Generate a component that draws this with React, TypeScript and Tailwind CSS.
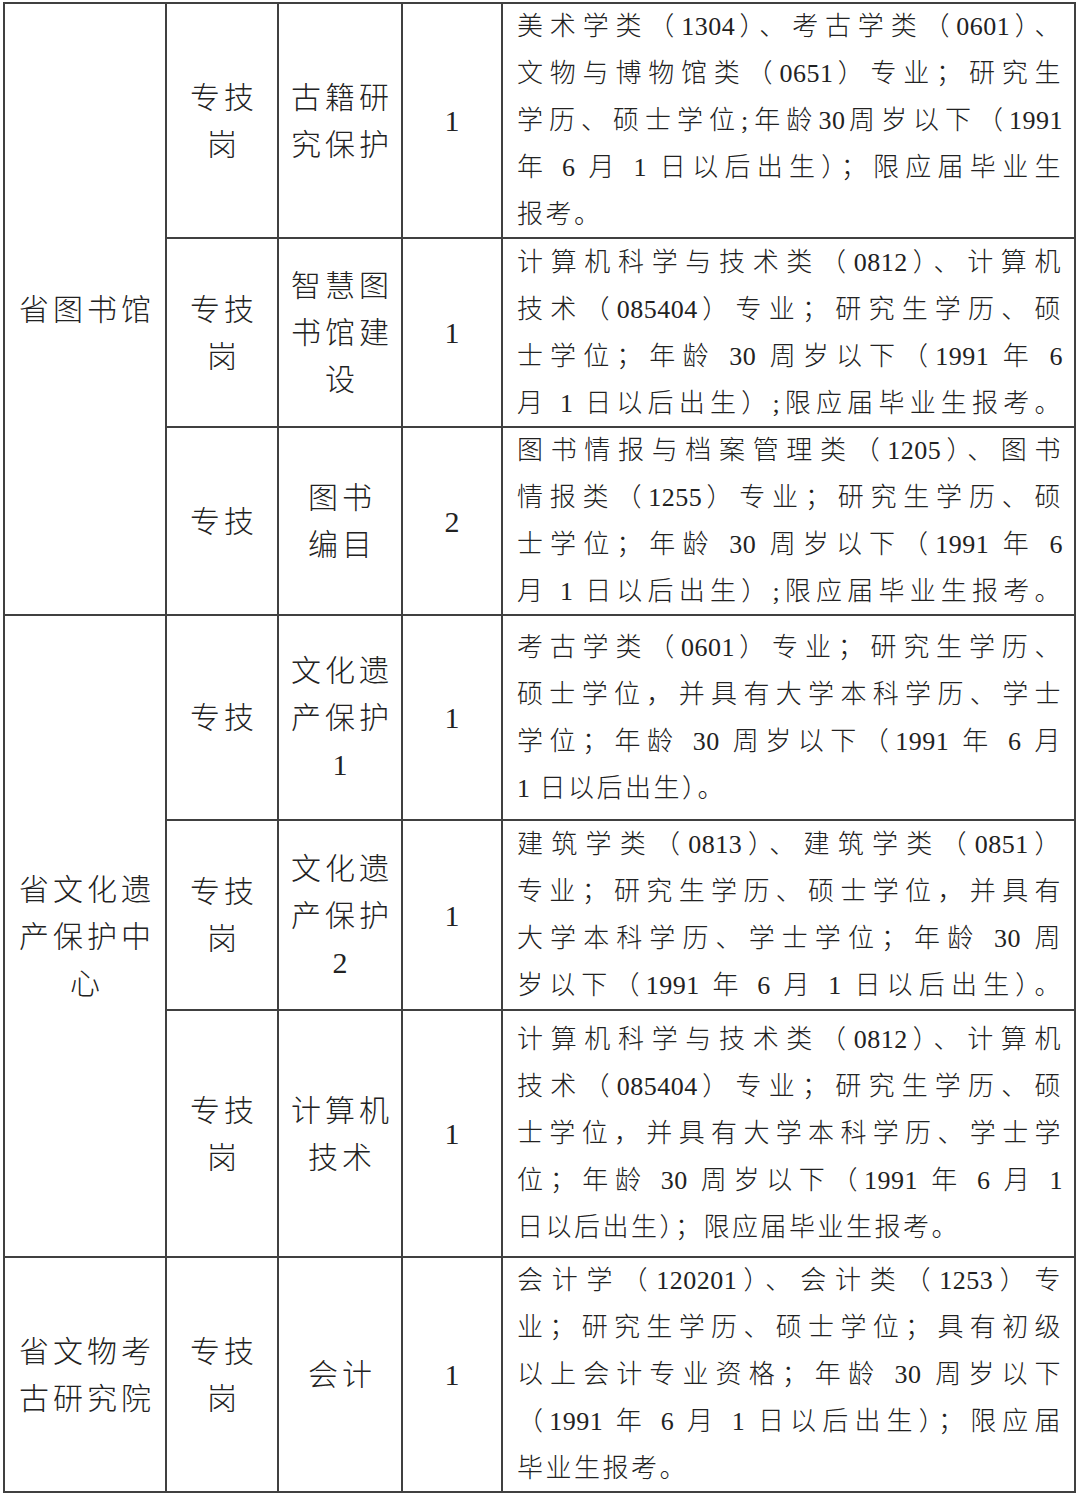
import React from "react";

type Line = { t: string; j?: boolean };

const J = (t: string): Line => ({ t, j: true });
const L = (t: string): Line => ({ t, j: false });

type Row = {
  unit?: { lines: string[]; span: string };
  type: string[];
  post: string[];
  num: string;
  desc: Line[];
};

const rows: Row[] = [
  {
    unit: { lines: ["省图书馆"], span: "row-span-3" },
    type: ["专技", "岗"],
    post: ["古籍研", "究保护"],
    num: "1",
    desc: [
      J("美术学类（1304）、考古学类（0601）、"),
      J("文物与博物馆类（0651）专业；研究生"),
      J("学历、硕士学位;年龄30周岁以下（1991"),
      J("年 6 月 1 日以后出生）；限应届毕业生"),
      L("报考。"),
    ],
  },
  {
    type: ["专技", "岗"],
    post: ["智慧图", "书馆建", "设"],
    num: "1",
    desc: [
      J("计算机科学与技术类（0812）、计算机"),
      J("技术（085404）专业；研究生学历、硕"),
      J("士学位；年龄 30 周岁以下（1991 年 6"),
      J("月 1 日以后出生）;限应届毕业生报考。"),
    ],
  },
  {
    type: ["专技"],
    post: ["图书", "编目"],
    num: "2",
    desc: [
      J("图书情报与档案管理类（1205）、图书"),
      J("情报类（1255）专业；研究生学历、硕"),
      J("士学位；年龄 30 周岁以下（1991 年 6"),
      J("月 1 日以后出生）;限应届毕业生报考。"),
    ],
  },
  {
    unit: { lines: ["省文化遗", "产保护中", "心"], span: "row-span-3" },
    type: ["专技"],
    post: ["文化遗", "产保护", "1"],
    num: "1",
    desc: [
      J("考古学类（0601）专业；研究生学历、"),
      J("硕士学位，并具有大学本科学历、学士"),
      J("学位；年龄 30 周岁以下（1991 年 6 月"),
      L("1 日以后出生）。"),
    ],
  },
  {
    type: ["专技", "岗"],
    post: ["文化遗", "产保护", "2"],
    num: "1",
    desc: [
      J("建筑学类（0813）、建筑学类（0851）"),
      J("专业；研究生学历、硕士学位，并具有"),
      J("大学本科学历、学士学位；年龄 30 周"),
      J("岁以下（1991 年 6 月 1 日以后出生）。"),
    ],
  },
  {
    type: ["专技", "岗"],
    post: ["计算机", "技术"],
    num: "1",
    desc: [
      J("计算机科学与技术类（0812）、计算机"),
      J("技术（085404）专业；研究生学历、硕"),
      J("士学位，并具有大学本科学历、学士学"),
      J("位；年龄 30 周岁以下（1991 年 6 月 1"),
      L("日以后出生）；限应届毕业生报考。"),
    ],
  },
  {
    unit: { lines: ["省文物考", "古研究院"], span: "row-span-1" },
    type: ["专技", "岗"],
    post: ["会计"],
    num: "1",
    desc: [
      J("会计学（120201）、会计类（1253）专"),
      J("业；研究生学历、硕士学位；具有初级"),
      J("以上会计专业资格；年龄 30 周岁以下"),
      J("（1991 年 6 月 1 日以后出生）；限应届"),
      L("毕业生报考。"),
    ],
  },
];

const FONT = "font-['Liberation_Serif','Noto_Sans_CJK_SC',serif]";

function Center({ lines, extra = "" }: { lines: string[]; extra?: string }) {
  return (
    <div
      className={`bg-white flex flex-col items-center justify-center text-center text-[30px] leading-[47px] tracking-[4px] pl-[4px] font-light text-[#222] ${extra}`}
    >
      {lines.map((l, i) => (
        <div key={i} className="whitespace-nowrap">
          {l}
        </div>
      ))}
    </div>
  );
}

function renderText(t: string) {
  const parts = t.split(/(\d+)/);
  return parts.map((p, i) =>
    /^\d+$/.test(p) ? (
      <span key={i} className="tracking-[0.5px]">
        {p}
      </span>
    ) : (
      <React.Fragment key={i}>{p}</React.Fragment>
    )
  );
}

function Desc({ lines }: { lines: Line[] }) {
  return (
    <div className="bg-white flex flex-col justify-center pl-[14px] pr-[11px] text-[26px] leading-[47px] tracking-[2.5px] font-light text-[#222]">
      {lines.map((l, i) => (
        <div
          key={i}
          className={
            l.j
              ? "whitespace-nowrap text-justify [text-align-last:justify]"
              : "whitespace-nowrap text-left"
          }
        >
          {renderText(l.t)}
        </div>
      ))}
    </div>
  );
}

export default function App() {
  return (
    <div className={`bg-white min-h-[1496px] w-[1080px] pt-[2px] pl-[3px] ${FONT}`}>
      <div className="grid w-fit grid-cols-[160px_110px_122px_98px_571px] grid-rows-[233px_187px_186px_203px_188px_245px_233px] gap-[2px] p-[2px] bg-[#404040]">
        {rows.map((r, i) => (
          <React.Fragment key={i}>
            {r.unit && <Center lines={r.unit.lines} extra={r.unit.span} />}
            <Center lines={r.type} />
            <Center lines={r.post} />
            <Center lines={[r.num]} />
            <Desc lines={r.desc} />
          </React.Fragment>
        ))}
      </div>
    </div>
  );
}
